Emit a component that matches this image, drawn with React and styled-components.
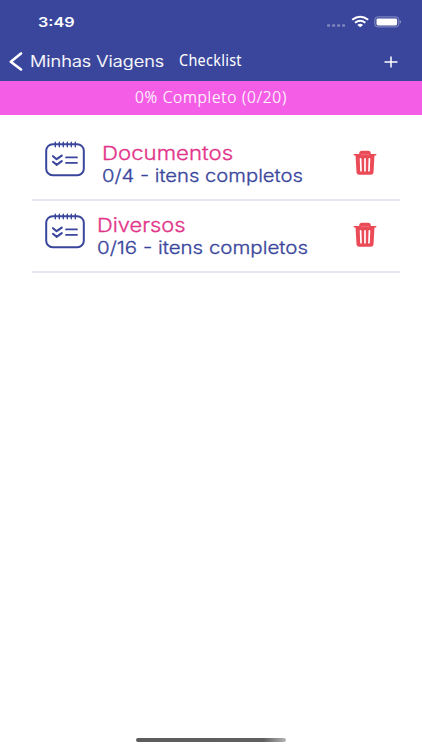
import styled, { createGlobalStyle } from "styled-components"

const GlobalStyle = createGlobalStyle`
    * {
        box-sizing: border-box;
    }
    body {
        margin: 0;
        background-color: #fff;
        font-family: Inter, "Liberation Sans", sans-serif;
    }
`

const StyledScreen = styled.div`
    display: flex;
    flex-direction: column;
    width: 422px;
    height: 750px;
    background-color: #fff;
    overflow: hidden;
`
const StyledHeader = styled.header`
    display: flex;
    flex-direction: column;
    height: 81px;
    background-color: #3A469C;
    color: #fff;
`
const StyledStatusBar = styled.div`
    display: flex;
    align-items: center;
    justify-content: space-between;
    height: 42px;
    padding: 2px 20px 0 38px;
`
const StyledStatusIcons = styled.div`
    display: flex;
    align-items: center;
`
const StyledNavBar = styled.nav`
    display: flex;
    align-items: center;
    height: 39px;
    padding-left: 8px;
`
const StyledBack = styled.div`
    display: flex;
    align-items: center;
    width: 171px;
    gap: 7px;
`
const StyledTitle = styled.div`
    padding-bottom: 4px;
`
const StyledPlus = styled.svg`
    margin-left: auto;
    margin-right: 24px;
`
// wide lettering: the glyphs are stretched from their left edge
const StyledText = styled.span`
    display: block;
    width: max-content;
    white-space: nowrap;
    font-size: ${(props) => props.$size}px;
    line-height: ${(props) => props.$line || 22}px;
    font-weight: ${(props) => props.$weight || 400};
    font-family: ${(props) => props.$family || "inherit"};
    letter-spacing: ${(props) => props.$spacing || 0}px;
    color: ${(props) => props.$color || "#fff"};
    -webkit-text-stroke: ${(props) => props.$stroke || 0}px currentColor;
    transform: scaleX(${(props) => props.$stretch || 1});
    transform-origin: ${(props) => props.$origin || "left"} center;
`
const StyledProgress = styled.div`
    display: flex;
    align-items: center;
    justify-content: center;
    height: 34px;
    padding-bottom: 2px;
    background-color: #F45EE6;
`
const StyledList = styled.main`
    display: flex;
    flex-direction: column;
    flex: 1;
    padding: 14px 22px 0 32px;
`
const StyledRow = styled.div`
    display: flex;
    align-items: flex-start;
    height: 72px;
    padding: 12px 23px 0 13px;
    border-bottom: 2px solid #E5E5ED;
`
const StyledRowText = styled.div`
    flex: 1;
    padding-left: ${(props) => props.$indent}px;
    padding-top: 1px;
`
const StyledTrash = styled.svg`
    margin-top: 9px;
`
const StyledFooter = styled.footer`
    display: flex;
    justify-content: center;
    height: 12px;
`
const StyledHomeBar = styled.div`
    width: 150px;
    height: 4px;
    border-radius: 2px;
    background: linear-gradient(to right, #5c5c5c 0%, #606060 85%, #b5b5b5 100%);
`

const titleFont = '"Noto Sans", sans-serif'

const lists = [
    { name: "Documentos", status: "0/4 - itens completos", indent: 16.5, nameStretch: 1.17, statusStretch: 1.155 },
    { name: "Diversos", status: "0/16 - itens completos", indent: 11.5, nameStretch: 1.15, statusStretch: 1.17 },
]

const NotepadIcon = () => (
    <svg width="40" height="38" viewBox="0 0 40 38" fill="none" stroke="#3A469C" strokeLinecap="round" strokeLinejoin="round">
        <rect x="1.2" y="3.2" width="37.6" height="31" rx="6.5" strokeWidth="2" />
        <path d="M10.3 1.2v4.6M14.3 1.2v4.6M18.3 1.2v4.6M22.3 1.2v4.6M26.3 1.2v4.6M30.3 1.2v4.6" strokeWidth="1.4" />
        <path d="M8 15.2l3.6 3 5.2-3.6M8 20.8l3.6 3 5.2-3.6" strokeWidth="2.1" />
        <path d="M21 16.4h11M21 21.9h11" strokeWidth="1.7" />
    </svg>
)

const TrashIcon = () => (
    <StyledTrash width="24" height="26" viewBox="0 0 24 26">
        <path d="M1.3 4.8H7V3.5q0-2 2-2h6q2 0 2 2v1.3h5.7" fill="#EA4B57" stroke="#EA4B57" strokeWidth="1.6" strokeLinecap="round" />
        <path d="M2.5 4.8h19l-1 17.4q-.2 2.5-2.8 2.5H6.3Q3.7 24.7 3.5 22.2z" fill="#EA4B57" />
        <path d="M7.600 8.800l.4 12M12 8.800v12M16.400 8.800l-.4 12" stroke="#fff" strokeWidth="1.7" strokeLinecap="round" />
    </StyledTrash>
)

const StatusIcons = () => (
    <StyledStatusIcons>
        <svg width="76" height="16" viewBox="0 0 76 16">
            <g fill="#7d85be">
                <rect x="1" y="10.2" width="3.2" height="2.6" rx="1" />
                <rect x="6" y="10.2" width="3.2" height="2.6" rx="1" />
                <rect x="11" y="10.2" width="3.2" height="2.6" rx="1" />
                <rect x="16" y="10.2" width="3.2" height="2.6" rx="1" />
            </g>
            <g fill="none" stroke="#fff" strokeWidth="2">
                <path d="M26.2 5.8Q34.2-.4 42.2 5.8" />
                <path d="M29 8.7Q34.2 4.8 39.4 8.7" />
            </g>
            <path d="M31.3 10.9Q34.2 8.8 37.1 10.9L34.2 13.3z" fill="#fff" />
            <rect x="48.8" y="2.9" width="24" height="10" rx="2.8" fill="none" stroke="#9198c8" strokeWidth=".9" />
            <rect x="50.5" y="4.4" width="20.6" height="7" rx="1.4" fill="#fff" />
            <path d="M73.7 6.2q1.3.4 1.3 1.7t-1.3 1.7z" fill="#9198c8" />
        </svg>
    </StyledStatusIcons>
)

export default function App() {
    const rows = lists.map((list) => (
        <StyledRow key={list.name}>
            <NotepadIcon />
            <StyledRowText $indent={list.indent}>
                <StyledText $size={19} $line={24} $weight={300} $stroke={0.3} $stretch={list.nameStretch} $color="#E2358A">{list.name}</StyledText>
                <StyledText $size={17.5} $line={20} $weight={300} $stroke={0.3} $stretch={list.statusStretch} $color="#3A469C">{list.status}</StyledText>
            </StyledRowText>
            <TrashIcon />
        </StyledRow>
    ))

    return (
        <StyledScreen>
            <GlobalStyle />
            <StyledHeader>
                <StyledStatusBar>
                    <StyledText $size={13.5} $weight={600} $stretch={1.2}>3:49</StyledText>
                    <StatusIcons />
                </StyledStatusBar>
                <StyledNavBar>
                    <StyledBack>
                        <svg width="15" height="20" viewBox="0 0 15 20" fill="none" stroke="#fff" strokeWidth="2.6" strokeLinecap="round" strokeLinejoin="round">
                            <path d="M13 1.5L2.8 9.7 13 17.5" />
                        </svg>
                        <StyledText $size={15.5} $line={24} $weight={300} $stroke={0.2} $stretch={1.17}>Minhas Viagens</StyledText>
                    </StyledBack>
                    <StyledTitle>
                        <StyledText $size={15.5} $spacing={0.3} $stretch={0.93} $family={titleFont}>Checklist</StyledText>
                    </StyledTitle>
                    <StyledPlus width="14" height="12" viewBox="0 0 14 12" stroke="#fff" strokeWidth="1.5">
                        <path d="M.5 6h13M7 .5v11" />
                    </StyledPlus>
                </StyledNavBar>
            </StyledHeader>
            <StyledProgress>
                <StyledText $size={15.5} $weight={300} $stroke={0.15} $spacing={0.75} $family={titleFont} $origin="center">0% Completo (0/20)</StyledText>
            </StyledProgress>
            <StyledList>{rows}</StyledList>
            <StyledFooter>
                <StyledHomeBar />
            </StyledFooter>
        </StyledScreen>
    )
}
